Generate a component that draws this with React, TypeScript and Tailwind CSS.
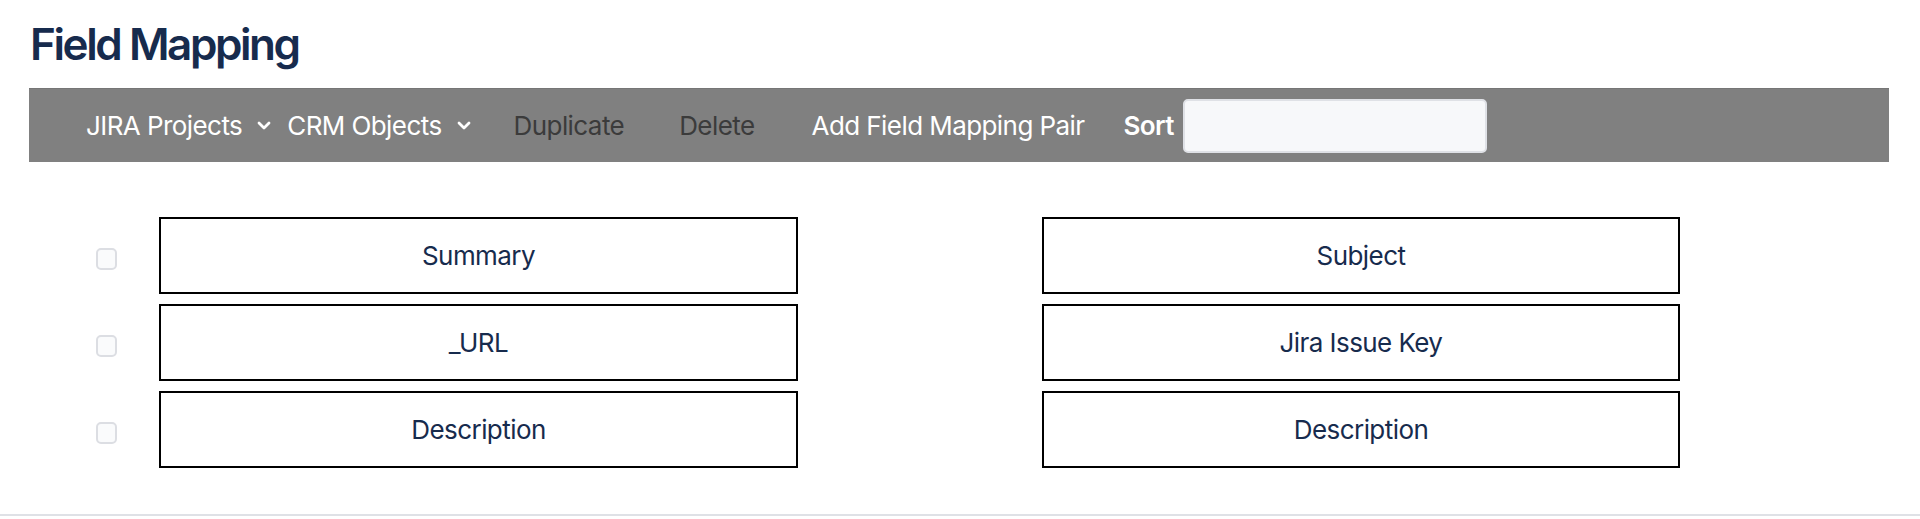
import { useState } from "react";

type Pair = { id: number; jira: string; crm: string };

const initialPairs: Pair[] = [
  { id: 1, jira: "Summary", crm: "Subject" },
  { id: 2, jira: "_URL", crm: "Jira Issue Key" },
  { id: 3, jira: "Description", crm: "Description" },
];

function Chevron() {
  return (
    <svg width="14" height="9" viewBox="0 0 14 9" fill="none" aria-hidden="true">
      <path d="M2 2l5 5 5-5" stroke="currentColor" strokeWidth="2.8" strokeLinecap="round" strokeLinejoin="round" />
    </svg>
  );
}

export default function App() {
  const [pairs] = useState<Pair[]>(initialPairs);
  const [checked, setChecked] = useState<number[]>([]);
  const [sort, setSort] = useState("");

  const toggle = (id: number) =>
    setChecked((prev) => (prev.includes(id) ? prev.filter((x) => x !== id) : [...prev, id]));

  return (
    <div className="min-h-screen bg-white font-['Inter','Liberation_Sans',sans-serif] text-[#172b4d]">
      <div className="border-b-2 border-[#dfe1e6] pb-[46px]">
        <h1 className="pl-[30px] pt-[22px] text-[44px] font-semibold leading-[44px] tracking-[-0.055em]">
          Field Mapping
        </h1>

        {/* Toolbar */}
        <div className="ml-[29px] mr-[31px] mt-[22px] flex h-[74px] items-center border-t border-[#767676] bg-[#808080] pl-[57px] text-[26px] leading-none tracking-[-0.022em]">
          <button className="flex items-center gap-[15px] text-white">
            <span>JIRA Projects</span>
            <Chevron />
          </button>
          <button className="ml-[16px] flex items-center gap-[15px] text-white">
            <span>CRM Objects</span>
            <Chevron />
          </button>
          <button className="ml-[43px] text-[#3b3b3b]" disabled={checked.length === 0}>
            Duplicate
          </button>
          <button className="ml-[55px] text-[#3b3b3b]" disabled={checked.length === 0}>
            Delete
          </button>
          <button className="ml-[57px] text-white">Add Field Mapping Pair</button>
          <span className="ml-[39px] font-semibold text-white">Sort</span>
          <input
            value={sort}
            onChange={(e) => setSort(e.target.value)}
            className="ml-[9px] h-[54px] w-[304px] rounded-[5px] border-2 border-[#dfe1e6] bg-[#f7f8fa] px-2 text-[20px] text-[#172b4d] outline-none"
          />
        </div>

        {/* Mapping rows */}
        <div className="mt-[55px] flex flex-col gap-[10px] pl-[96px] text-[26px] tracking-[-0.022em]">
          {pairs.map((p) => (
            <div key={p.id} className="flex items-start">
              <input
                type="checkbox"
                checked={checked.includes(p.id)}
                onChange={() => toggle(p.id)}
                className="mt-[31px] h-[22px] w-[21px] appearance-none rounded-[5px] border-2 border-[#dcdee3] bg-[#fafbfc]"
              />
              <div className="ml-[42px] flex h-[77px] w-[639px] items-center justify-center border-2 border-black">
                {p.jira}
              </div>
              <div className="ml-[244px] flex h-[77px] w-[638px] items-center justify-center border-2 border-black">
                {p.crm}
              </div>
            </div>
          ))}
        </div>
      </div>
    </div>
  );
}
